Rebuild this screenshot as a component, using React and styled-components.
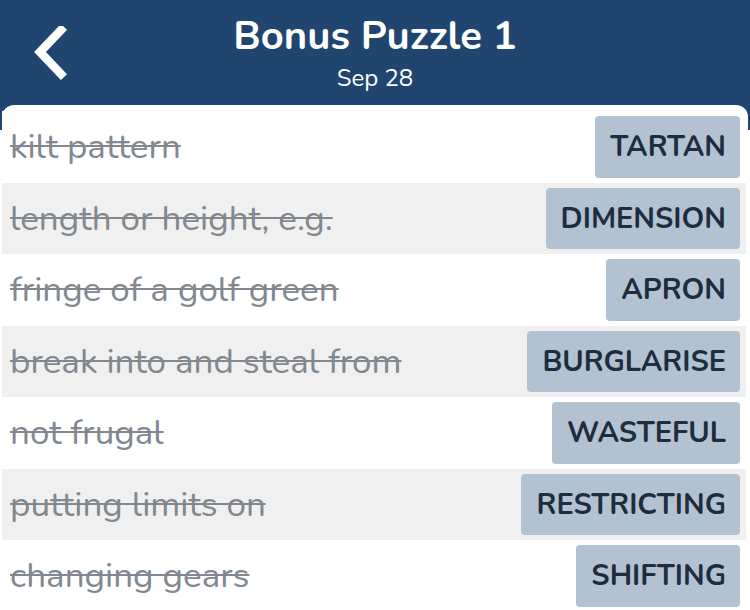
import React from "react";
import styled, { createGlobalStyle } from "styled-components";

const GlobalStyle = createGlobalStyle`
  html, body {
    margin: 0;
    padding: 0;
    background: #ffffff;
  }
  body {
    font-family: "Nunito", "Lato", "Open Sans", sans-serif;
  }
`;

const clues = [
  { clue: "kilt pattern", answer: "TARTAN" },
  { clue: "length or height, e.g.", answer: "DIMENSION" },
  { clue: "fringe of a golf green", answer: "APRON" },
  { clue: "break into and steal from", answer: "BURGLARISE" },
  { clue: "not frugal", answer: "WASTEFUL" },
  { clue: "putting limits on", answer: "RESTRICTING" },
  { clue: "changing gears", answer: "SHIFTING" },
];

const App = () => {
  return (
    <Page>
      <GlobalStyle />
      <Header>
        <BackButton aria-label="back">
          <svg width="36" height="54" viewBox="0 0 36 54">
            <path
              d="M29 4 L8 26 L29 48"
              fill="none"
              stroke="#ffffff"
              strokeWidth="8.5"
              strokeLinecap="square"
              strokeLinejoin="miter"
            />
          </svg>
        </BackButton>
        <TitleBox>
          <Title>Bonus Puzzle 1</Title>
          <SubTitle>Sep 28</SubTitle>
        </TitleBox>
      </Header>
      <Card>
        {clues.map((item, i) => (
          <Row key={item.answer} shaded={i % 2 === 1}>
            <Clue>{item.clue}</Clue>
            <Answer>{item.answer}</Answer>
          </Row>
        ))}
      </Card>
    </Page>
  );
};

//styled-components

const Page = styled.div`
  width: 750px;
  min-height: 610px;
  background: linear-gradient(#20466f 0, #20466f 130px, #ffffff 130px);
  overflow: hidden;
`;

const Header = styled.div`
  position: relative;
  height: 105px;
  box-sizing: border-box;
  padding-top: 12px;
  display: flex;
  justify-content: center;
  background: #20466f;
`;

const BackButton = styled.div`
  position: absolute;
  left: 32px;
  top: 26px;
  width: 36px;
  height: 54px;
`;

const TitleBox = styled.div`
  display: flex;
  flex-direction: column;
  align-items: center;
`;

const Title = styled.div`
  color: #ffffff;
  font-size: 40px;
  font-weight: 700;
  line-height: 48px;
`;

const SubTitle = styled.div`
  margin-top: 3px;
  color: #ffffff;
  font-size: 24px;
  line-height: 30px;
`;

const Card = styled.div`
  margin: 0 2px;
  padding-top: 6px;
  background: #ffffff;
  border-radius: 12px 12px 0 0;
`;

const Row = styled.div`
  height: 71.5px;
  box-sizing: border-box;
  margin-right: 2px;
  padding: 5px 6px 5px 8px;
  display: flex;
  align-items: center;
  justify-content: space-between;
  background: ${(p) => (p.shaded ? "#f0f0f0" : "#ffffff")};
`;

const Clue = styled.div`
  color: #81888f;
  font-size: 35px;
  text-decoration: line-through;
  text-decoration-thickness: 2px;
  white-space: nowrap;
`;

const Answer = styled.div`
  height: 100%;
  box-sizing: border-box;
  display: flex;
  align-items: center;
  padding: 0 14px 0 15px;
  background: #b3c2d0;
  border-radius: 4px;
  color: #1d2d3e;
  font-size: 29px;
  font-weight: 700;
`;

export default App;
